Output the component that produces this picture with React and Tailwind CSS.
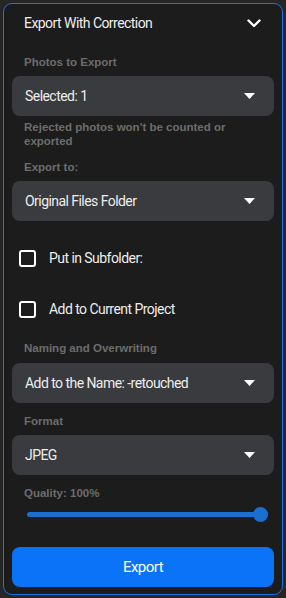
import React, { useState } from "react";

const labelCls =
  "px-[20px] text-[11.5px] leading-[14px] font-bold tracking-normal text-[#6c6c6c] [font-family:'Liberation_Sans',Arial,sans-serif]";

const Caret = () => (
  <svg width="11" height="6" viewBox="0 0 11 6" className="shrink-0">
    <path d="M0 0 L11 0 L5.5 6 Z" fill="#ffffff" />
  </svg>
);

const Select = ({ value, className = "" }) => (
  <div
    className={`mx-[8px] h-[40px] rounded-[8px] bg-[#3a3b3e] flex items-center justify-between pl-[13px] pr-[19px] text-[14px] text-[#ededed] ${className}`}
  >
    <span>{value}</span>
    <Caret />
  </div>
);

const Check = ({ label, checked, onToggle, className = "" }) => (
  <div className={`flex items-center h-[16px] pl-[15px] ${className}`} onClick={onToggle}>
    <div className="w-[17px] h-[17px] border-2 border-white rounded-[3px] shrink-0 flex items-center justify-center">
      {checked && <div className="w-[9px] h-[9px] bg-white rounded-[1px]" />}
    </div>
    <span className="ml-[13px] text-[14px] text-[#ededed]">{label}</span>
  </div>
);

export default function App() {
  const [subfolder, setSubfolder] = useState(false);
  const [project, setProject] = useState(false);
  const quality = 100;

  return (
    <div className="w-[286px] h-[598px] bg-[#262626] p-[3px] [font-family:Roboto,'Liberation_Sans',sans-serif] tracking-[-0.55px]">
      <div className="h-full border border-[#1a72e6] rounded-[9px] bg-[#1c1c1c] flex flex-col">
        {/* Header */}
        <div className="h-[38px] flex items-center justify-between pl-[20px] pr-[21px]">
          <span className="text-[14px] text-[#ededed]">Export With Correction</span>
          <svg width="14" height="9" viewBox="0 0 14 9">
            <polyline
              points="1.5,1.5 7,7 12.5,1.5"
              fill="none"
              stroke="#ffffff"
              strokeWidth="2.4"
              strokeLinecap="round"
              strokeLinejoin="round"
            />
          </svg>
        </div>

        <div className={`${labelCls} mt-[13px]`}>Photos to Export</div>
        <Select value="Selected: 1" className="mt-[7px]" />
        <div className={`${labelCls} mt-[4px] w-[250px]`}>
          Rejected photos won't be counted or exported
        </div>

        <div className={`${labelCls} mt-[12px]`}>Export to:</div>
        <Select value="Original Files Folder" className="mt-[7px]" />

        <Check
          label="Put in Subfolder:"
          checked={subfolder}
          onToggle={() => setSubfolder(!subfolder)}
          className="mt-[29px]"
        />
        <Check
          label="Add to Current Project"
          checked={project}
          onToggle={() => setProject(!project)}
          className="mt-[35px]"
        />

        <div className={`${labelCls} mt-[24px]`}>Naming and Overwriting</div>
        <Select value="Add to the Name: -retouched" className="mt-[8px]" />

        <div className={`${labelCls} mt-[11px]`}>Format</div>
        <Select value="JPEG" className="mt-[7px]" />

        <div className={`${labelCls} mt-[11px]`}>Quality: {quality}%</div>
        <div className="mt-[6px] h-[16px] ml-[23px] mr-[14px] relative flex items-center">
          <div className="h-[5px] w-full rounded-full bg-[#1b6fd0]" />
          <div className="absolute right-0 w-[15px] h-[15px] rounded-full bg-[#1b6fd0]" />
        </div>

        <button className="mt-[25px] mx-[8px] h-[40px] rounded-[8px] bg-[#0a73f7] text-white text-[15px]">
          Export
        </button>
      </div>
    </div>
  );
}
